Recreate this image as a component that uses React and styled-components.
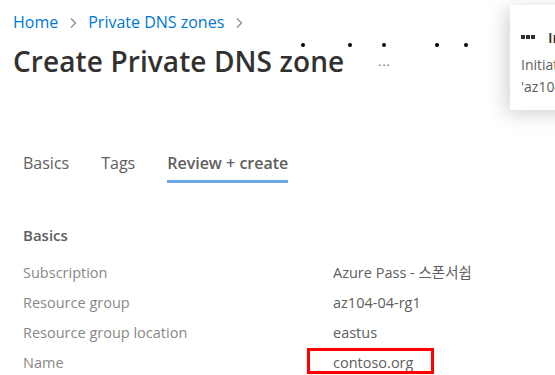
import styled, { createGlobalStyle } from "styled-components";

const GlobalStyle = createGlobalStyle`
  html, body {
    margin: 0;
    padding: 0;
    background: #ffffff;
    overflow: hidden;
  }
  body {
    font-family: "Open Sans", "Noto Sans CJK KR", sans-serif;
  }
`;

const Page = styled.div`
  position: relative;
  width: 555px;
  height: 375px;
  overflow: hidden;
  display: flex;
  flex-direction: column;
`;

const Header = styled.div`
  padding: 10px 0 0 13px;
  display: flex;
  flex-direction: column;
`;

const Breadcrumb = styled.nav`
  display: flex;
  align-items: center;
  gap: 10px;
  font-size: 16px;
  color: #0078d4;
  height: 24px;
`;

const Crumb = styled.span`
  white-space: nowrap;
`;

const Chevron = styled.svg`
  width: 10px;
  height: 12px;
  margin-top: 1px;
`;

const TitleRow = styled.div`
  position: relative;
  display: flex;
  align-items: center;
  gap: 34px;
  margin-top: 10px;
  height: 34px;
`;

const Title = styled.h1`
  margin: 0;
  font-size: 28px;
  font-weight: 600;
  color: #323130;
  letter-spacing: 0.1px;
  white-space: nowrap;
`;

const MoreButton = styled.span`
  font-size: 12px;
  color: #605e5c;
  letter-spacing: 1px;
`;

const LoadingDot = styled.span`
  position: absolute;
  top: -1px;
  width: 4px;
  height: 4px;
  border-radius: 50%;
  background: #000000;
`;

const Tabs = styled.div`
  display: flex;
  gap: 32px;
  padding-left: 23px;
  margin-top: 74px;
`;

const Tab = styled.div`
  font-size: 16px;
  color: #605e5c;
  font-weight: ${(p) => (p.$active ? 600 : 400)};
  padding-bottom: 6px;
  border-bottom: 3px solid ${(p) => (p.$active ? "#6aa9e2" : "transparent")};
  line-height: 22px;
`;

const Section = styled.div`
  padding-left: 23px;
  margin-top: 41px;
`;

const SectionTitle = styled.h2`
  margin: 0 0 16px 0;
  font-size: 15px;
  font-weight: 600;
  color: #605e5c;
  line-height: 22px;
`;

const Grid = styled.div`
  display: grid;
  grid-template-columns: 310px 1fr;
  row-gap: 8px;
`;

const Label = styled.div`
  font-size: 14.5px;
  color: #8a8886;
  line-height: 22px;
  white-space: nowrap;
`;

const Value = styled.div`
  position: relative;
  font-size: 14.5px;
  color: #605e5c;
  line-height: 22px;
  white-space: nowrap;
`;

const Highlight = styled.span`
  position: absolute;
  left: -26px;
  top: -4px;
  width: 121px;
  height: 20px;
  border: 3px solid #ff0000;
`;

const Toast = styled.div`
  position: absolute;
  top: 5px;
  left: 510px;
  width: 260px;
  height: 105px;
  background: #ffffff;
  box-shadow: -4px 4px 18px rgba(0, 0, 0, 0.18);
  padding: 22px 0 0 11px;
  box-sizing: border-box;
`;

const ToastTitle = styled.div`
  display: flex;
  align-items: center;
  gap: 13px;
  font-size: 15px;
  font-weight: 600;
  color: #323130;
  line-height: 20px;
`;

const Squares = styled.span`
  display: flex;
  gap: 1px;
`;

const Square = styled.span`
  width: 4px;
  height: 4px;
  background: #323130;
`;

const ToastBody = styled.div`
  margin-top: 7px;
  font-size: 14px;
  color: #605e5c;
  line-height: 22px;
`;

const ChevronIcon = () => (
  <Chevron viewBox="0 0 10 12">
    <path d="M3 1.5 L7.5 6 L3 10.5" fill="none" stroke="#8a8886" strokeWidth="1.2" />
  </Chevron>
);

const dots = [288, 335, 369, 422, 451];

const rows = [
  ["Subscription", "Azure Pass - 스폰서쉽"],
  ["Resource group", "az104-04-rg1"],
  ["Resource group location", "eastus"],
  ["Name", "contoso.org", true],
];

export default function App() {
  return (
    <Page>
      <GlobalStyle />
      <Header>
        <Breadcrumb>
          <Crumb>Home</Crumb>
          <ChevronIcon />
          <Crumb>Private DNS zones</Crumb>
          <ChevronIcon />
        </Breadcrumb>
        <TitleRow>
          <Title>Create Private DNS zone</Title>
          <MoreButton>...</MoreButton>
          {dots.map((x) => (
            <LoadingDot key={x} style={{ left: x }} />
          ))}
        </TitleRow>
      </Header>

      <Tabs>
        <Tab>Basics</Tab>
        <Tab>Tags</Tab>
        <Tab $active>Review + create</Tab>
      </Tabs>

      <Section>
        <SectionTitle>Basics</SectionTitle>
        <Grid>
          {rows.map(([label, value, marked]) => (
            <>
              <Label key={label + "l"}>{label}</Label>
              <Value key={label + "v"}>
                {marked && <Highlight />}
                {value}
              </Value>
            </>
          ))}
        </Grid>
      </Section>

      <Toast>
        <ToastTitle>
          <Squares>
            <Square />
            <Square />
            <Square />
          </Squares>
          Initializing deployment...
        </ToastTitle>
        <ToastBody>
          Initiating the deployment of
          <br />
          'az104-04-rg1'...
        </ToastBody>
      </Toast>
    </Page>
  );
}
